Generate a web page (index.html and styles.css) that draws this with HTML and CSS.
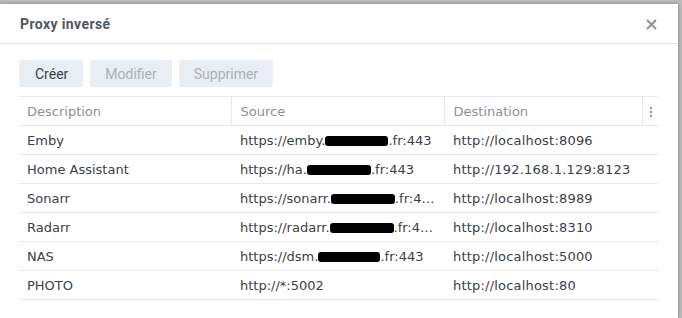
FILE: index.html
```html
<!DOCTYPE html>
<html lang="fr">
<head>
<meta charset="utf-8">
<title>Proxy inversé</title>
<link rel="stylesheet" href="styles.css">
</head>
<body>
<div class="dialog">
  <div class="dialog-header">
    <span class="title">Proxy inversé</span>
    <svg class="close" width="11" height="11" viewBox="0 0 11 11"><path d="M1 1 L10 10 M10 1 L1 10" stroke="#8e949b" stroke-width="2" fill="none"/></svg>
  </div>
  <div class="dialog-body">
    <div class="toolbar">
      <button class="btn btn-create">Créer</button>
      <button class="btn disabled">Modifier</button>
      <button class="btn disabled">Supprimer</button>
    </div>
    <table class="grid">
      <colgroup><col class="c1"><col class="c2"><col class="c3"><col class="c4"></colgroup>
      <thead>
        <tr><th>Description</th><th>Source</th><th>Destination</th><th class="more"><span class="dots"><i></i><i></i><i></i></span></th></tr>
      </thead>
      <tbody>
        <tr><td>Emby</td><td><div class="cell">https://emby.<span class="redact" style="width:63px"></span>.fr:443</div></td><td>http://localhost:8096</td><td></td></tr>
        <tr><td>Home Assistant</td><td><div class="cell">https://ha.<span class="redact" style="width:64px"></span>.fr:443</div></td><td>http://192.168.1.129:8123</td><td></td></tr>
        <tr><td>Sonarr</td><td><div class="cell">https://sonarr.<span class="redact" style="width:64px"></span>.fr:443</div></td><td>http://localhost:8989</td><td></td></tr>
        <tr><td>Radarr</td><td><div class="cell">https://radarr.<span class="redact" style="width:64px"></span>.fr:443</div></td><td>http://localhost:8310</td><td></td></tr>
        <tr><td>NAS</td><td><div class="cell">https://dsm.<span class="redact" style="width:62px"></span>.fr:443</div></td><td>http://localhost:5000</td><td></td></tr>
        <tr><td>PHOTO</td><td><div class="cell">http://*:5002</div></td><td>http://localhost:80</td><td></td></tr>
      </tbody>
    </table>
  </div>
</div>
</body>
</html>
```
FILE: styles.css
```css
html, body { margin: 0; padding: 0; }
body {
  background: #bdbdbd;
  width: 682px;
  height: 318px;
  overflow: hidden;
}
.dialog {
  margin-top: 4px;
  width: 678px;
  height: 314px;
  background: #fff;
  box-shadow: 0 0 4px rgba(0,0,0,0.35);
}
.dialog-header {
  height: 39px;
  border-bottom: 1px solid #e3e6ea;
  display: flex;
  align-items: center;
  justify-content: space-between;
  padding: 0 21px 0 20px;
}
.title {
  font-family: Roboto, "Liberation Sans", sans-serif;
  font-weight: bold;
  font-size: 14px;
  letter-spacing: 0.4px;
  color: #50565e;
  padding-top: 1px;
}
.close { display: block; margin-top: 2px; }
.dialog-body {
  padding: 16px 19px 0 19px;
}
.toolbar {
  display: flex;
  gap: 7px;
  margin-bottom: 9px;
}
.btn {
  height: 27px;
  border: none;
  border-radius: 3px;
  background: #e9eef4;
  font-family: Roboto, "Liberation Sans", sans-serif;
  font-size: 14px;
  color: #3c4148;
  padding: 0 15px;
  margin: 0;
}
.btn-create { padding: 0 15px 0 16px; }
.btn.disabled { color: #a9b0b8; }
.grid {
  width: 640px;
  border-collapse: collapse;
  table-layout: fixed;
  font-family: "DejaVu Sans", Verdana, sans-serif;
  font-size: 13px;
}
.c1 { width: 212px; }
.c2 { width: 213px; }
.c3 { width: 198px; }
.c4 { width: 17px; }
.grid th, .grid td {
  height: 28px;
  padding: 0 8px;
  text-align: left;
  white-space: nowrap;
  overflow: hidden;
  border-bottom: 1px solid #e6e8eb;
}
.grid th {
  font-weight: normal;
  color: #8b9097;
  border-top: 1px solid #e6e8eb;
  border-right: 1px solid #e6e8eb;
}
.grid th.more { border-right: none; padding: 0; text-align: center; }
.grid td { color: #3b4047; padding-left: 8px; }
.grid td:nth-child(2), .grid td:nth-child(3) { padding-left: 9px; }
.grid th:nth-child(2), .grid th:nth-child(3) { padding-left: 9px; }
.grid td:nth-child(3) { letter-spacing: 0.2px; }
.cell {
  overflow: hidden;
  text-overflow: ellipsis;
  white-space: nowrap;
}
.redact {
  display: inline-block;
  height: 10px;
  background: #000;
  border-radius: 3px;
  vertical-align: -1px;
}
.dots {
  display: inline-flex;
  flex-direction: column;
  gap: 2px;
  vertical-align: middle;
}
.dots i {
  display: block;
  width: 2px;
  height: 2px;
  background: #8b9097;
}
```
